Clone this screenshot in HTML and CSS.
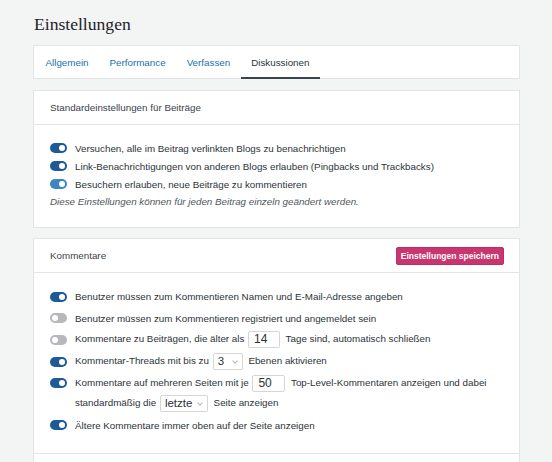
FILE: index.html
```html
<!DOCTYPE html>
<html lang="de">
<head>
<meta charset="utf-8">
<title>Einstellungen</title>
<link rel="stylesheet" href="styles.css">
</head>
<body>
<main class="page">
  <h1 class="title">Einstellungen</h1>
  <nav class="tabs">
    <a class="tab">Allgemein</a>
    <a class="tab">Performance</a>
    <a class="tab">Verfassen</a>
    <a class="tab active">Diskussionen</a>
  </nav>

  <section class="card">
    <header class="card-head">Standardeinstellungen für Beiträge</header>
    <div class="card-body card-body-a">
      <div class="row"><span class="toggle on"></span><span>Versuchen, alle im Beitrag verlinkten Blogs zu benachrichtigen</span></div>
      <div class="row"><span class="toggle on"></span><span>Link-Benachrichtigungen von anderen Blogs erlauben (Pingbacks und Trackbacks)</span></div>
      <div class="row"><span class="toggle on light"></span><span>Besuchern erlauben, neue Beiträge zu kommentieren</span></div>
      <p class="note">Diese Einstellungen können für jeden Beitrag einzeln geändert werden.</p>
    </div>
  </section>

  <section class="card">
    <header class="card-head">
      <span>Kommentare</span>
      <button class="save">Einstellungen speichern</button>
    </header>
    <div class="card-body card-body-b">
      <div class="row"><span class="toggle on"></span><span>Benutzer müssen zum Kommentieren Namen und E-Mail-Adresse angeben</span></div>
      <div class="row"><span class="toggle"></span><span>Benutzer müssen zum Kommentieren registriert und angemeldet sein</span></div>
      <div class="row"><span class="toggle"></span><span>Kommentare zu Beiträgen, die älter als <span class="field w32">14</span> Tage sind, automatisch schließen</span></div>
      <div class="row"><span class="toggle on"></span><span>Kommentar-Threads mit bis zu <span class="field select w30">3</span> Ebenen aktivieren</span></div>
      <div class="row multi"><span class="toggle on"></span><span class="multi-text">Kommentare auf mehreren Seiten mit je <span class="field w33">50</span> Top-Level-Kommentaren anzeigen und dabei<br>standardmäßig die <span class="field select w47">letzte</span> Seite anzeigen</span></div>
      <div class="row"><span class="toggle on"></span><span>Ältere Kommentare immer oben auf der Seite anzeigen</span></div>
    </div>
    <div class="card-foot"></div>
  </section>
</main>
</body>
</html>
```

FILE: styles.css
```css
* { box-sizing: border-box; }

html, body {
  margin: 0;
  background: #f3f4f4;
  font-family: "Liberation Sans", Arial, sans-serif;
  color: #2c3338;
}

.page {
  padding: 12px 32px 0 33px;
}

.title {
  margin: 0 0 9px 1px;
  font-family: "Liberation Serif", "Times New Roman", serif;
  font-weight: normal;
  font-size: 17.6px;
  line-height: 24px;
  color: #1d2327;
}

.tabs {
  display: flex;
  height: 34px;
  background: #fff;
  border: 1px solid #e2e4e5;
  padding-left: 1px;
}

.tab {
  display: flex;
  align-items: center;
  padding: 0 10.5px;
  font-size: 9.8px;
  color: #2271b1;
  position: relative;
}

.tab.active {
  color: #2c3338;
  border-bottom: 2px solid #3c434a;
  margin-bottom: -1px;
  padding-top: 1px;
}

.card {
  background: #fff;
  border: 1px solid #e2e4e5;
  margin-top: 11px;
}

.card + .card { margin-top: 10px; }

.card-head {
  display: flex;
  align-items: center;
  justify-content: space-between;
  height: 34px;
  padding: 0 16px;
  font-size: 9.8px;
  color: #3c434a;
  border-bottom: 1px solid #e2e4e5;
}

.save {
  font-family: "Liberation Sans", Arial, sans-serif;
  font-weight: bold;
  font-size: 8.5px;
  color: #fff;
  background: #c9356e;
  border: 1px solid #b82f63;
  border-radius: 2px;
  height: 18px;
  padding: 0 4px;
  margin-right: -1px;
}

.card-body {
  padding: 14px 16px 16px;
  font-size: 9.8px;
}

.card-body-b {
  padding: 13px 16px 17px;
}

.row {
  display: flex;
  align-items: center;
  height: 18px;
  gap: 8px;
  white-space: nowrap;
}

.card-body-b .row { height: 21.6px; }

.card-body-b .row.multi {
  height: auto;
  align-items: flex-start;
  line-height: 20px;
  padding-top: 1px;
  margin-bottom: 1px;
}

.row.multi .toggle { margin-top: 5px; }

.toggle {
  flex: none;
  position: relative;
  width: 17px;
  height: 10px;
  border-radius: 5px;
  background: #b6b8bb;
}

.toggle::after {
  content: "";
  position: absolute;
  top: 2px;
  left: 2px;
  width: 6px;
  height: 6px;
  border-radius: 50%;
  background: #fff;
}

.toggle.on { background: #1d5b98; }
.toggle.on.light { background: #3d86c6; }
.toggle.on::after { left: 9px; }

.note {
  margin: 0;
  height: 18px;
  line-height: 18px;
  font-style: italic;
  color: #50575e;
}

.field {
  display: inline-block;
  height: 17px;
  line-height: 15px;
  border: 1px solid #d4d6d8;
  border-radius: 2px;
  font-size: 12px;
  color: #2c3338;
  padding: 0 5px;
  vertical-align: middle;
  margin: 0 3px 0 1px;
  position: relative;
}

.field.select {
  padding-left: 4px;
  font-size: 11.5px;
}

.w32 { width: 32px; }
.w33 { width: 33px; }
.w30 { width: 30px; }
.w47 { width: 48px; }

.field.select::after {
  content: "";
  position: absolute;
  right: 5px;
  top: 5px;
  width: 3px;
  height: 3px;
  border-right: 1px solid #b4b7ba;
  border-bottom: 1px solid #b4b7ba;
  transform: rotate(45deg);
}

.card-foot {
  height: 20px;
  border-top: 1px solid #e2e4e5;
}
```
